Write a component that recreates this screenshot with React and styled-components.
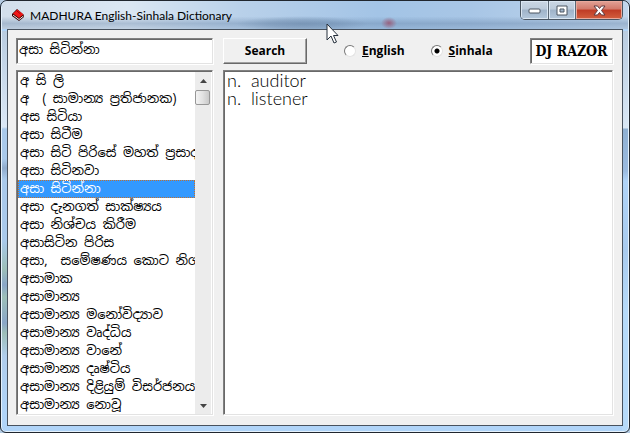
import React, { useState } from "react";
import styled, { createGlobalStyle, css } from "styled-components";

const ui = '"Open Sans", "Noto Sans", sans-serif';
const sinhala = '"Noto Sans Sinhala", "Noto Sans", "Liberation Sans", sans-serif';

const GlobalStyle = createGlobalStyle`
  * { box-sizing: border-box; }
  html, body { margin: 0; background: #b4cbe2; }
  button, input { font: inherit; }
`;

const sunken = css`
  border: 1px solid;
  border-color: #808080 #e3e3e3 #e3e3e3 #808080;
  box-shadow: inset 1px 1px 0 #696969, 1px 1px 0 #fff;
  background: #fff;
`;

const Window = styled.div`
  position: relative;
  display: flex;
  flex-direction: column;
  min-height: 100vh;
  padding: 0 6px 6px;
  border: 1px solid #20262e;
  border-radius: 7px 7px 6px 6px;
  box-shadow: inset 0 0 0 1px #e4f1fc;
  background:
    linear-gradient(to bottom, #b9cce0 0, #dbe8f6 96px, #a9c9ea 98px, #a9c9ea 128px, #8fabcc 137px, #a9c9ea 148px, #a9c9ea 210px, #9dbfb8 238px, #8aa6c8 254px, #9dbfb8 266px, #8aa6c8 292px, #9dbfb8 302px, #b0cdec 325px, #b0d4f8 380px) left 30px / 7px 100% no-repeat,
    linear-gradient(to bottom, #b9cce0 0, #d9e7f5 97px, #8fb0d2 98px, #9bbbe0 140px, #b0d4f8 150px, #a9cbee 220px, #b6daf9 280px) right 30px / 7px 100% no-repeat,
    #b0d4f8;
`;

const TitleBar = styled.header`
  display: flex;
  align-items: flex-start;
  height: 28px;
  margin: 0 -5px;
  padding-left: 4px;
  border-radius: 6px 6px 0 0;
  background:
    radial-gradient(ellipse 8px 6px at 387px 22px, #9c4a66c0, #9c4a6600),
    linear-gradient(to bottom, #5d7ba000 55%, #5d7ba060 80%, #5d7ba030),
    radial-gradient(ellipse 66px 8px at 300px 23px, #4d6a8a60, #4d6a8a40 50%, #4d6a8a00),
    linear-gradient(to right, #d3dfeb 0, #dbe7f3 20%, #b9d1ea 38%, #a3c4e6 60%, #a8c6e6 75%, #c1d6ec);
`;

const BookIcon = styled.svg`
  width: 14px;
  height: 14px;
  margin: 7px 5px 0;
  flex: none;
`;

const Title = styled.h1`
  flex: 1;
  margin: 7px 0 0;
  font: 12px/16px Lato, sans-serif;
  color: #000;
  white-space: nowrap;
`;

const WindowButtons = styled.div`
  display: flex;
  margin-right: 5px;
  border: 1px solid #4a5663;
  border-top: 0;
  border-radius: 0 0 5px 5px;
  overflow: hidden;
`;

const CaptionButton = styled.button`
  display: grid;
  place-items: center;
  width: ${(p) => (p.$close ? 47 : 27)}px;
  height: 18px;
  padding: 0;
  border: 0;
  border-left: ${(p) => (p.$first ? "0" : "1px solid #5b6875")};
  box-shadow: inset 0 0 0 1px ${(p) => (p.$close ? "#e9a99c" : "#dbe7f3")};
  background: ${(p) =>
    p.$close
      ? "linear-gradient(#e2a297 0, #d2796a 45%, #bf3b25 50%, #d3603f 100%)"
      : "linear-gradient(#cbd7e4 0, #bccbdb 45%, #9fb3c9 50%, #b4c8dc 100%)"};
`;

const Client = styled.main`
  flex: 1;
  display: grid;
  grid-template-columns: 197px minmax(0, 1fr);
  grid-template-rows: 26px minmax(0, 1fr);
  gap: 6px 10px;
  padding: 8px 9px 10px 8px;
  border: 1px solid #48525e;
  background: #f0f0f0;
`;

const WordInput = styled.input`
  ${sunken}
  width: 100%;
  min-width: 0;
  height: 26px;
  padding: 0 2px 3px;
  border-radius: 0;
  outline: 0;
  font: 13px/18px ${sinhala};
  color: #000;
`;

const Toolbar = styled.div`
  display: flex;
  align-items: center;
`;

const SearchButton = styled.button`
  width: 84px;
  height: 26px;
  padding: 0;
  border: 1px solid;
  border-color: #fff #696969 #696969 #fff;
  box-shadow: inset -1px -1px 0 #a0a0a0;
  background: #f0f0f0;
  font: bold 12px/16px ${ui};
  color: #000;
`;

const Choices = styled.div`
  display: flex;
  gap: 26px;
  margin-left: 37px;
`;

const Choice = styled.label`
  display: flex;
  align-items: center;
  gap: 6px;
  font: bold 12px/18px ${ui};
  color: #000;
`;

const Radio = styled.input`
  appearance: none;
  width: 12px;
  height: 12px;
  margin: 0;
  border: 1px solid;
  border-color: #777 #e3e3e3 #e3e3e3 #777;
  border-radius: 50%;
  background: #fff;
  &:checked {
    background: radial-gradient(circle, #000 0 2px, #fff 3px);
  }
`;

const Badge = styled.div`
  ${sunken}
  display: grid;
  place-items: center;
  width: 83px;
  height: 26px;
  margin-left: auto;
  font: 900 14px/18px "DejaVu Serif Condensed", "DejaVu Serif", serif;
  color: #000;
  white-space: nowrap;
`;

const WordPane = styled.section`
  ${sunken}
  display: flex;
  min-width: 0;
  padding: 1px 1px 0;
`;

const WordList = styled.ul`
  flex: 1;
  min-width: 0;
  margin: 0;
  padding: 0;
  list-style: none;
  overflow: hidden;
`;

const Word = styled.li`
  height: 18px;
  padding: 0 2px;
  font: 13px/18px ${sinhala};
  white-space: pre;
  overflow: hidden;
  color: ${(p) => (p.$selected ? "#fff" : "#000")};
  background: ${(p) => (p.$selected ? "#3399ff" : "transparent")};
  outline: ${(p) => (p.$selected ? "1px dotted #c07030" : "0")};
  outline-offset: -1px;
  cursor: default;
`;

const ScrollBar = styled.div`
  display: flex;
  flex-direction: column;
  width: 16px;
  background: #ececec;
`;

const ScrollArrow = styled.button`
  display: grid;
  place-items: center;
  width: 16px;
  height: 17px;
  padding: 0;
  border: 0;
  background: transparent;
`;

const Thumb = styled.div`
  height: 15px;
  margin: 1px 1px auto 0;
  border: 1px solid #979797;
  border-radius: 2px;
  background: linear-gradient(to right, #f3f3f3, #e2e2e2 50%, #c9c9c9);
`;

const Meanings = styled.section`
  ${sunken}
  min-width: 0;
  padding: 0 3px;
`;

const Meaning = styled.p`
  margin: 0;
  font: 300 18px/18px Lato, sans-serif;
  color: #000;
  white-space: pre;
`;

const Pointer = styled.svg`
  position: absolute;
  left: 325px;
  top: 22px;
  width: 13px;
  height: 21px;
  pointer-events: none;
`;

const words = [
  "අ සි ලි",
  "අ  ( සාමාන්‍ය ප්‍රතිජානක)",
  "අස සිටියා",
  "අසා සිටීම",
  "අසා සිටි පිරිසේ මහත් ප්‍රසාදය",
  "අසා සිටිනවා",
  "අසා සිටින්නා",
  "අසා දැනගත් සාක්ෂ්‍යය",
  "අසා නිශ්චය කිරීම",
  "අසාසිටින පිරිස",
  "අසා,  සමේෂණය කොට නිශ්",
  "අසාමාක",
  "අසාමාන්‍ය",
  "අසාමාන්‍ය මනෝවිද්‍යාව",
  "අසාමාන්‍ය වෘද්ධිය",
  "අසාමාන්‍ය වානේ",
  "අසාමාන්‍ය දෘෂ්ටිය",
  "අසාමාන්‍ය දිළියුම් විසර්ජනය",
  "අසාමාන්‍ය නොවූ",
];

function Book() {
  return (
    <BookIcon viewBox="0 0 14 14" aria-hidden="true">
      <path d="M1 6 6 1 13 7v2l-5 4L1 8z" fill="#300" />
      <path d="M2 5.500 6.500 1.500 12.500 6.500 8 10z" fill="#f01818" />
      <path d="M2 7 8 11.500 12.500 8" fill="none" stroke="#f4eaea" />
      <path d="M6 3 9.500 6" stroke="#a00010" />
    </BookIcon>
  );
}

export default function App() {
  const [selected, setSelected] = useState(6);
  const [language, setLanguage] = useState("sinhala");
  const [query, setQuery] = useState(words[6]);

  const choose = (index) => {
    setSelected(index);
    setQuery(words[index]);
  };

  return (
    <>
      <GlobalStyle />
      <Window>
        <TitleBar>
          <Book />
          <Title>MADHURA English-Sinhala Dictionary</Title>
          <WindowButtons>
            <CaptionButton $first aria-label="Minimize">
              <svg width="13" height="7" viewBox="0 0 13 7">
                <rect x="1" y="2" width="11" height="4" rx="1" fill="#fff" stroke="#4d5763" />
              </svg>
            </CaptionButton>
            <CaptionButton aria-label="Maximize">
              <svg width="12" height="11" viewBox="0 0 12 11">
                <path d="M1 1h10v9H1zM4 4v3h4V4z" fillRule="evenodd" fill="#fff" stroke="#4d5763" />
              </svg>
            </CaptionButton>
            <CaptionButton $close aria-label="Close">
              <svg width="13" height="11" viewBox="0 0 13 11">
                <path d="M1 1h3.500l2 2.500L8.500 1H12L8.500 5.500 12 10H8.500l-2-2.500-2 2.500H1l3.500-4.500z" fill="#fff" stroke="#5d3a40" />
              </svg>
            </CaptionButton>
          </WindowButtons>
        </TitleBar>
        <Client>
          <WordInput aria-label="Word" value={query} onChange={(e) => setQuery(e.target.value)} />
          <Toolbar>
            <SearchButton type="button">Search</SearchButton>
            <Choices role="radiogroup" aria-label="Language">
              <Choice>
                <Radio
                  type="radio"
                  name="language"
                  checked={language === "english"}
                  onChange={() => setLanguage("english")}
                />
                <span><u>E</u>nglish</span>
              </Choice>
              <Choice>
                <Radio
                  type="radio"
                  name="language"
                  checked={language === "sinhala"}
                  onChange={() => setLanguage("sinhala")}
                />
                <span><u>S</u>inhala</span>
              </Choice>
            </Choices>
            <Badge>DJ RAZOR</Badge>
          </Toolbar>
          <WordPane>
            <WordList role="listbox" aria-label="Words">
              {words.map((word, index) => (
                <Word
                  key={word}
                  role="option"
                  aria-selected={index === selected}
                  $selected={index === selected}
                  onClick={() => choose(index)}
                >
                  {word}
                </Word>
              ))}
            </WordList>
            <ScrollBar>
              <ScrollArrow aria-label="Scroll up">
                <svg width="7" height="4" viewBox="0 0 7 4"><path d="M0 4 3.500 0 7 4z" fill="#444" /></svg>
              </ScrollArrow>
              <Thumb />
              <ScrollArrow aria-label="Scroll down">
                <svg width="7" height="4" viewBox="0 0 7 4"><path d="M0 0h7L3.500 4z" fill="#444" /></svg>
              </ScrollArrow>
            </ScrollBar>
          </WordPane>
          <Meanings aria-label="Meanings">
            <Meaning>n.  auditor</Meaning>
            <Meaning>n.  listener</Meaning>
          </Meanings>
        </Client>
        <Pointer viewBox="0 0 13 21" aria-hidden="true">
          <path d="M1 1v16l4-4 3 7 2.500-1-3-6.500H12z" fill="#fff" stroke="#26303c" />
        </Pointer>
      </Window>
    </>
  );
}
